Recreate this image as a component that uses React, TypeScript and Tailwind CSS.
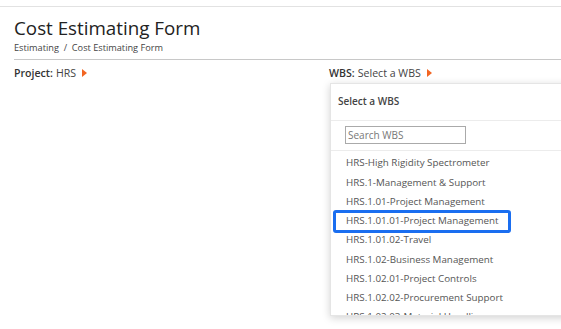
import React from 'react';

const wbsItems = [
  'HRS-High Rigidity Spectrometer',
  'HRS.1-Management & Support',
  'HRS.1.01-Project Management',
  'HRS.1.01.01-Project Management',
  'HRS.1.01.02-Travel',
  'HRS.1.02-Business Management',
  'HRS.1.02.01-Project Controls',
  'HRS.1.02.02-Procurement Support',
  'HRS.1.02.03-Material Handling',
];

const Caret = () => (
  <svg width="5" height="8" viewBox="0 0 5 8" className="inline-block ml-[6px]">
    <path d="M0 0 L5 4 L0 8 Z" fill="#f26522" />
  </svg>
);

const App: React.FC = () => {
  return (
    <div className="w-[561px] h-[329px] overflow-hidden bg-white relative font-['Open_Sans',sans-serif] text-[#333]">
      <div className="mt-[6px] border-t border-[#e2e2e2] pl-[14px]">
        <h1 className="text-[18.8px] leading-[24px] pt-[9px] text-[#222]">Cost Estimating Form</h1>
        <div className="text-[9.2px] leading-[13px] mt-[1px] text-[#444]">
          Estimating&nbsp; / &nbsp;Cost Estimating Form
        </div>
        <div className="border-t border-[#c8c8c8] mt-[5px] flex items-center h-[28px] text-[10.6px]">
          <div className="w-[315px] flex items-center">
            <span className="font-semibold text-[#333]">Project:</span>
            <span className="ml-[3px] text-[#444]">HRS</span>
            <Caret />
          </div>
          <div className="relative flex items-center">
            <span className="font-semibold text-[#333]">WBS:</span>
            <span className="ml-[3px] text-[#444]">Select a WBS</span>
            <Caret />
            <div className="absolute left-[1px] top-[17px] w-[260px] h-[233px] bg-white border border-[#e5e5e5] shadow-[0_2px_8px_rgba(0,0,0,0.18)] overflow-hidden">
              <div className="h-[37px] flex items-center pl-[7px] text-[10px] font-semibold text-[#444] border-b border-[#ececec]">
                Select a WBS
              </div>
              <div className="h-[30px] pl-[14px] pt-[5px] border-b border-[#ececec]">
                <input
                  readOnly
                  placeholder="Search WBS"
                  className="w-[121px] h-[18px] border border-[#aaa] px-[2px] text-[10px] text-[#555] placeholder:text-[#777] outline-none"
                />
              </div>
              <div className="pt-[3.5px]">
                {wbsItems.map((item, i) => (
                  <div key={i} className="px-[2px]">
                    <div
                      className={
                        i === 3
                          ? 'w-[178px] h-[23px] -my-[2px] border-[3px] border-[#1a6ef0] rounded-[3px] pl-[10px] flex items-center whitespace-nowrap text-[9.8px] text-[#555] relative z-10'
                          : 'h-[19.3px] pl-[13px] flex items-center whitespace-nowrap text-[9.8px] text-[#555]'
                      }
                    >
                      {item}
                    </div>
                  </div>
                ))}
              </div>
            </div>
          </div>
        </div>
      </div>
    </div>
  );
};

export default App;
